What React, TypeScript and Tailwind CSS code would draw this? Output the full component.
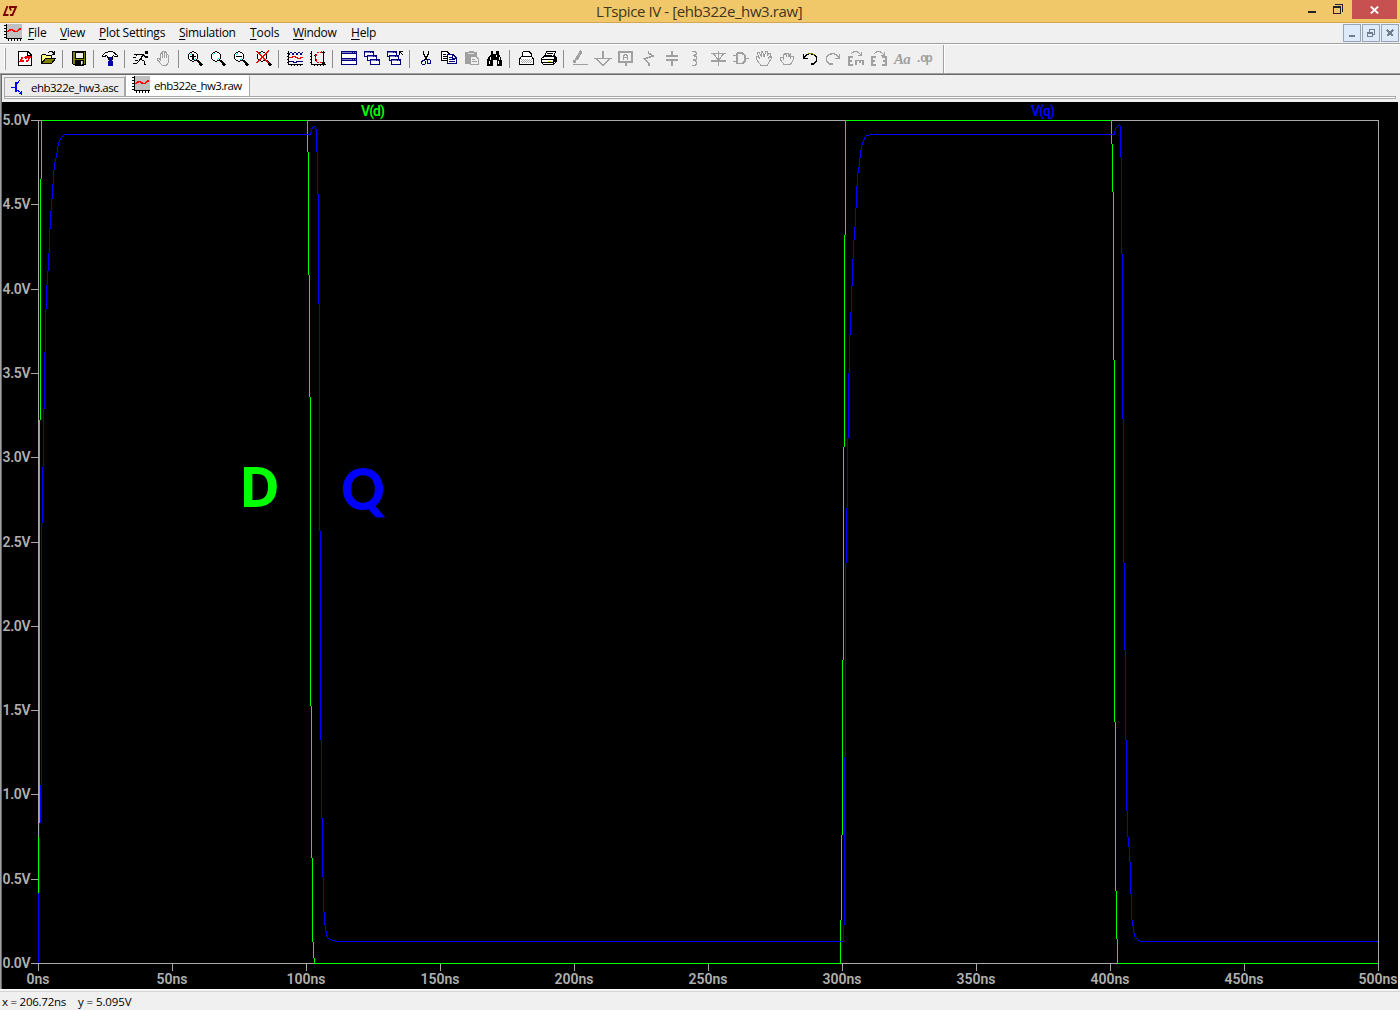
import type { ReactNode } from "react";

const Icon = ({ children, className = "" }: { children: ReactNode; className?: string }) => (
  <span className="flex h-5 w-[23px] shrink-0 pl-1 pt-[2px]">
    <svg width="16" height="16" viewBox="0 0 16 16" fill="none" stroke="#000" shapeRendering="crispEdges" className={"overflow-visible " + className}>
      {children}
    </svg>
  </span>
);

const Sep = () => <span className="ml-[3px] mr-1 h-[18px] w-px shrink-0 self-center bg-[#8d8d8d]" />;

const G = "#a0a0a0";

const PlotIcon = () => (
  <svg width="18" height="18" viewBox="0 0 18 18" shapeRendering="crispEdges" fill="none">
    <path d="M3 0H18V14H3z" fill="#c0c0c0" />
    <path d="M2.5 0V14.5H18M0 1.5H3M0 4.5H3M0 7.5H3M0 10.5H3M0 13.5H3M4.5 14V17M7.5 14V17M10.5 14V17M13.5 14V17M16.5 14V17" stroke="#000" />
    <path d="M3 7.5H4L5 6.5L6.5 5.5H8L10 7L11 7.5H13L15 5.5L17 4.5" stroke="#f00" strokeWidth="1.7" />
  </svg>
);

const Zoom = ({ children }: { children?: ReactNode }) => (
  <Icon>
    <circle cx="6" cy="5.5" r="4.7" fill="#fff" />
    <path d="M3 4L5 2M7 9L9 7" stroke="#0ff" />
    <path d="M10 9L15 14.5" strokeWidth="2.4" />
    {children}
  </Icon>
);

const Win = ({ x, y }: { x: number; y: number }) => (
  <>
    <path d={`M${x + 0.5} ${y + 0.5}h9v5h-9z`} fill="#fff" stroke="#000080" />
    <path d={`M${x} ${y + 1}h10`} stroke="#000080" strokeWidth="2" />
    <path d={`M${x + 1} ${y + 1.5}h5M${x + 7} ${y + 1.5}h1`} stroke="#8080c0" />
  </>
);

const Toolbar = () => (
  <div className="flex h-[30px] items-center border-b border-t border-b-[#a0a0a0] border-t-white">
    <span className="ml-1 mr-[7px] h-[22px] w-[2px] border-r border-[#a0a0a0] bg-white" />
    <Icon>
      <path d="M1.5 .5H11L14.5 4V14.5H1.5z" fill="#fff" />
      <path d="M10.5 1V4.5H14" />
      <path d="M5.5 6L3.5 10H7M7.5 6H13L10.5 10H9M8 6L9.5 8" stroke="#f00" strokeWidth="1.5" />
    </Icon>
    <Icon>
      <path d="M1.5 12.5V4.5L2.5 3.5H5.5L6.5 4.5H11.5V7.5" fill="#ffff80" />
      <path d="M1.5 12.5L5.5 7.5H15.5L11.5 12.5z" fill="#808000" />
      <path d="M8.5 1.5L10 .5H12L14.5 3M14.5 0V3.5H11.5" />
    </Icon>
    <Sep />
    <Icon>
      <path d="M1.5 .5H14.5V13.5H2.5L1.5 12.5z" fill="#808000" />
      <path d="M4 1H12V7H4z" fill="#efefef" />
      <path d="M4 9H12V14H4z" fill="#000" /><path d="M10 10H11V13H10z" fill="#fff" stroke="#fff" strokeWidth=".6" />
    </Icon>
    <Sep />
    <Icon>
      <path d="M.5 4.5L3.5 1.5H5.5L6.5 .5H10.5L15.5 4.5V5.5H12.5L11.5 4.5L10 6.5H6L4.5 4.5L2.5 5.5H.5z" fill="#fff" />
      <path d="M7 6H10V10H11V15H6V10H7z" fill="#0000b0" stroke="none" />
      <path d="M6.5 6V9M10.5 6V9" />
    </Icon>
    <Sep />
    <Icon>
      <path d="M12 0H14.5V2.5H12z" fill="#000" stroke="none" />
      <path d="M4 3.5H10L13 6H15M10 4L7 9" strokeWidth="1.6" />
      <path d="M4.5 3L2.5 5.5M8 8.5L11 10V13H13M7 9L4 12H0M1 3.5H3M0 6.5H3M2 9.5H5" />
    </Icon>
    <Icon>
      <path d="M6.5 14.5L1.5 9V7.5H3L4.5 9.5V3L5.5 2L6.5 3V7V1L7.5 .5L8.5 1V7V1.5L9.5 1L10.5 2V7V4L11.5 3.5L12.5 4.5V11L10.5 14.5z" stroke={G} />
    </Icon>
    <Sep />
    <Zoom><path d="M3 5.5H9M6 3V9" strokeWidth="1.5" /></Zoom>
    <Zoom />
    <Zoom><path d="M3 5.5H9" strokeWidth="1.5" /></Zoom>
    <Zoom><path d="M0 0L13 12M13 0L0 12" stroke="#f00" strokeWidth="1.4" /></Zoom>
    <Sep />
    <Icon>
      <path d="M1.5 0V13.5H16M0 2.5H2M0 5.5H2M0 8.5H2M0 11.5H2M4.5 14V15M7.5 14V15M10.5 14V15M13.5 14V15" />
      <path d="M2 3.5L4 1L6 3.5L8 1L10 3.5L12 1L14 3.5L16 1M2 10.5H6V11.5H9V10.5H16" stroke="#000080" />
      <path d="M2 6.5H5V5.5H8V6.5H10V7.5H13V6.5H16" stroke="#f00" />
    </Icon>
    <Icon>
      <path d="M1.5 0V13.5H16M0 2.5H2M0 5.5H2M0 8.5H2M0 11.5H2M4.5 14V15M7.5 14V15M10.5 14V15M13.5 14V15M13.5 0V13M12 2L13.5 .5L15 2M12 11.5L13.5 13L15 11.5M5.5 3V10M4.5 5L5.5 4L6.5 5" />
      <path d="M12 1L8 1.5L5.5 5V8L8 11.5H12" stroke="#f00" strokeDasharray="2 1" strokeWidth="1.3" />
    </Icon>
    <Sep />
    <Icon>
      <path d="M0.5 .5H15.5V13.5H.5z" fill="#fff" stroke="#000080" />
      <path d="M0 1.5H16M0 8.5H16" stroke="#000080" strokeWidth="3" />
      <path d="M1 1.5H11M12 1.5H13M14 1.5H15M1 8.5H11M12 8.5H13M14 8.5H15" stroke="#8080c0" />
    </Icon>
    <Icon><Win x={0} y={0} /><Win x={3} y={4} /><Win x={6} y={8} /></Icon>
    <Icon><Win x={0} y={0} /><Win x={2} y={4} /><Win x={4} y={8} /><path d="M12.5 4V.5H16M13 1L16 4" /></Icon>
    <Sep />
    <Icon>
      <path d="M5.5 0V3L9 9M10.5 0V3L7 9" strokeWidth="1.4" />
      <path d="M5 9.5H6.5L7.5 11V12.5L6 13.5H4.5L3.5 12.5V11zM10 8.5H11.5L12.5 10V12L11.5 12.5H10L9 11.5V9.5z" stroke="#000080" />
    </Icon>
    <Icon>
      <path d="M.5 .5H6L8.5 3V9.5H.5z" fill="#fff" /><path d="M2 3.5H5M2 5.5H6M2 7.5H6" />
      <path d="M6.5 3.5H12L15.5 7V12.5H6.5z" fill="#fff" stroke="#000080" /><path d="M8 6.5H11M8 8.5H14M8 10.5H14M11.5 4V7.5H15" stroke="#000080" />
    </Icon>
    <Icon>
      <path d="M1 1H4L5 0H9L10 1H13V13H1z" fill={G} stroke="none" />
      <path d="M4 2.5H10" stroke="#ddd" />
      <path d="M6.5 5.5H12L14.5 8V13.5H6.5z" fill="#efefef" stroke={G} /><path d="M8 8.5H11M8 10.5H13" stroke={G} />
    </Icon>
    <Icon>
      <path d="M4 0H6V3H9V0H12V3L14 7L15 10V15H10V9H6V15H0V10L1 7L4 3z" fill="#000" stroke="none" />
      <path d="M3.5 6V9M2.5 10V13M9.5 4V6M12.5 6V9M11.5 10V13" stroke="#fff" />
    </Icon>
    <Sep />
    <Icon>
      <path d="M4.5 5V1.5L6 .5H11L13.5 3V6" fill="#fff" />
      <path d="M3.5 5.5H13.5L15.5 8V13.5H1.5V8z" fill="#fff" /><path d="M3 8.5H14M3 10.5H14" stroke="#aaa" strokeDasharray="1 1" /><path d="M3 9.5H14M3 11.5H14" stroke="#aaa" strokeDasharray="1 1" strokeDashoffset="1" />
    </Icon>
    <Icon>
      <path d="M3.5 6L5.5 .5H14.5L12.5 6" fill="#fff" /><path d="M6 2.5H12M5 4.5H11" />
      <path d="M.5 7.5L3 5.5H14.5L15.5 7V10L12.5 13.5H2.5L.5 11.5z" fill="#fff" />
      <path d="M1 8.5H12M1 11.5H12M12.5 8V14M14 6V11" strokeWidth="1.4" /><path d="M7 10.5H10" stroke="#dd0" />
    </Icon>
    <Sep />
    <Icon><path d="M9.5 0L4 9M3 9L2 12" stroke={G} strokeWidth="3" /><path d="M1 13.5H16" stroke={G} /></Icon>
    <Icon><path d="M8 0V7M.5 7.5H15.5L8 14.5z" stroke={G} strokeWidth="1.4" /></Icon>
    <Icon>
      <path d="M1 1H14V11H1zM8 11V14.5" stroke={G} strokeWidth="1.7" />
      <path d="M5.5 9V5L6.5 3.5H8.5L9.5 5V9M5 6.5H10" stroke={G} strokeWidth="1.3" />
    </Icon>
    <Icon><path d="M7.5 0V2L12 5L3 8L8 12V15" stroke={G} strokeWidth="1.4" /></Icon>
    <Icon><path d="M8 0V5M8 9V15M2 5H14M2 9H14" stroke={G} strokeWidth="2" /></Icon>
    <Icon><path d="M5 .5H8L9.5 2V3.5L7 4.5L9.5 6V8L7 9L9.5 11V13L8 14.5H5" stroke={G} strokeWidth="1.5" /></Icon>
    <Icon><path d="M8.5 0V15M1 2.5H16M1 10H16M3.5 3L8.5 9L13.5 3" stroke={G} strokeWidth="1.3" /></Icon>
    <Icon><path d="M0 4.5H4M0 10.5H4M4 2V12.5H9L12 10.5V4.5L9 2H3.5M12 7.5H16" stroke={G} strokeWidth="1.7" /></Icon>
    <Icon><path d="M5 14.5L0 8V6L2 5.5L4 8L1.5 3V1.5H3L6 6L5 1L6.5 .5L8 6L10 .5H11V5L13 2H14.5V4L12 8L15 5.5L15.5 7L11 14.5z" stroke={G} /></Icon>
    <Icon><path d="M5 13.5L1.5 9V6.5H3.5L4.5 8V3.5L6.5 2.5L7.5 6V2.5H9L10 6V3.5L11.5 3V7L12.5 5.5H14V9L11.5 13.5z" stroke={G} /></Icon>
    <Icon><path d="M1.5 3V7.5H6M2 7L5 3.5L8 2.5L12 3.5L14.5 6V10L12 13H9" strokeWidth="1.3" /><path d="M6 2.5H10L13 4" stroke="#808000" /></Icon>
    <Icon><path d="M14.5 3V7.5H10M14 7L11 3.5L8 2.5L4 3.5L1.5 6V10L4 13H8" stroke={G} strokeWidth="1.3" /></Icon>
    <Icon>
      <path d="M5 6H1V14H5M1 10H4M8 14V9.5H16M12 10V12M15 10V14" stroke={G} strokeWidth="1.6" />
      <path d="M3 3L6 .5H9L13 4M13.5 1V4.5H10" stroke={G} />
    </Icon>
    <Icon>
      <path d="M5 6H1V14H5M1 10H4M11 6H15V14H11M15 10H12" stroke={G} strokeWidth="1.6" />
      <path d="M3 3L6 .5H9L13 4M13.5 1V4.5H10" stroke={G} />
    </Icon>
    <span className="h-5 w-[23px] pl-1 font-['Liberation_Serif',serif] text-[15px] font-bold italic leading-[21px] tracking-[-0.8px] text-[#a0a0a0]">Aa</span>
    <span className="h-5 w-[23px] pl-[2px] font-['Liberation_Mono',monospace] text-[12px] font-bold leading-5 tracking-[-2px] text-[#a0a0a0]">.op</span>
    <span className="ml-[7px] h-[28px] w-px bg-[#a0a0a0]" />
    <span className="h-[28px] w-px bg-white" />
  </div>
);

/* One vertical run per pixel column, starting at column x. */
const cols = (x: number, ys: number[]) =>
  ys.slice(1).map((y, i) => `M${x + i + 0.5} ${ys[i]}V${y}`).join("");

const green =
  cols(38, [963, 837, 420, 179, 120]) + "M41 120.5H308" +
  cols(307, [120, 152, 275, 397, 706, 858, 942, 958, 964]) + "M314 963.5H841" +
  cols(840, [964, 920, 835, 660, 447, 235, 120]) + "M845 120.5H1112" +
  cols(1111, [120, 144, 192, 360, 722, 891, 939, 964]) + "M1117 963.5H1378";

const blue =
  cols(38, [963, 893, 823, 785, 523, 467, 409, 352, 309, 285, 271, 253, 229, 211, 199, 184, 170, 162, 158, 153, 146, 142, 140, 138, 137, 136, 135]) +
  "M64 134.5H311" +
  cols(310, [135, 132, 129, 127]) + "M313 126.5H315" +
  cols(315, [127, 129, 152, 194, 304, 531, 740, 818, 877, 912, 925, 931, 936, 938]) +
  "M328 938.5H330M330 939.5H332M332 940.5H335M335 941.5H843" +
  cols(843, [941, 925, 757, 563, 508, 438, 373, 335, 312, 286, 259, 240, 227, 208, 186, 173, 167, 158, 150, 145, 142, 140, 137, 136]) +
  "M866 135.5H869M869 134.5H1115" +
  cols(1114, [134, 131, 128, 127, 126, 125, 124]) +
  cols(1120, [126, 157, 254, 419, 563, 650, 740, 811, 837, 847, 862, 894, 920, 926, 933, 937]) +
  "M1135 938.5H1137M1137 939.5H1138M1138 940.5H1140M1140 941.5H1378";

const yTicks = [120, 204, 289, 373, 457, 542, 626, 710, 794, 879, 963];

const Plot = () => (
  <svg width="1396" height="887" viewBox="2 102 1396 887" className="block bg-black font-['Roboto',sans-serif] text-[14px] font-semibold">
    <g shapeRendering="crispEdges" fill="none">
      <path d="M38.5 120.5H1378.5V963.5H38.5z" stroke="#a8a8a8" />
      {yTicks.map((y, i) => (
        <path key={y} d={`M31 ${y + 0.5}H38M${38.5 + i * 134} 964V971`} stroke="#a8a8a8" />
      ))}
      <path d={green} stroke="#0f0" />
      <path d={blue} stroke="#00f" />
    </g>
    <g fill="#b0b0b0">
      {yTicks.map((y, i) => (
        <text key={y} x="2.5" y={y + 5} textLength="28">{(5 - i * 0.5).toFixed(1)}V</text>
      ))}
      {yTicks.map((y, i) => (
        <text key={y} x={38 + i * 134} y="984" textAnchor="middle" textLength={i === 0 ? 23 : i === 1 ? 31 : 39}>{i * 50}ns</text>
      ))}
    </g>
    <text x="361" y="115.5" fill="#0f0" textLength="24">V(d)</text>
    <text x="1031" y="115.5" fill="#00f" textLength="24">V(q)</text>
    <text x="239" y="507" fill="#0f0" fontSize="56" fontWeight="700" fontFamily="Open Sans" textLength="41" lengthAdjust="spacingAndGlyphs">D</text>
    <text x="341" y="509.5" fill="#00f" fontSize="57" fontWeight="900" fontFamily="Lato" textLength="44" lengthAdjust="spacingAndGlyphs">Q</text>
  </svg>
);

const menus = [
  ["File", "w-[32px]", "tracking-[-0.1px]"],
  ["View", "w-[39px]", "tracking-[-0.35px]"],
  ["Plot Settings", "w-[80px]", "tracking-[-0.25px]"],
  ["Simulation", "w-[71px]", "tracking-[-0.3px]"],
  ["Tools", "w-[43px]", "tracking-[-0.1px]"],
  ["Window", "w-[58px]", "tracking-[-0.3px]"],
  ["Help", "w-[40px]", "tracking-[-0.2px]"],
];

const MdiButton = ({ children }: { children: ReactNode }) => (
  <span className="flex h-[18px] w-[18px] items-center justify-center border border-[#95a5b7] bg-[#dceafa]">
    <svg width="12" height="12" viewBox="0 0 12 12" fill="none" stroke="#6f7f8e" shapeRendering="crispEdges">{children}</svg>
  </span>
);

export default function App() {
  return (
    <div className="flex h-[1010px] w-[1400px] flex-col overflow-hidden bg-[#f0f0f0] font-['Open_Sans',sans-serif] text-black">
      <header className="flex h-[23px] items-start border-b border-[#d2a857] bg-[#f0c869]">
        <svg width="18" height="22" viewBox="0 0 18 22" fill="none" stroke="#800000" strokeWidth="1.9">
          <path d="M7.5 6L4 15H8.5M9 7H16L12.5 15H10M9.5 7L11 10.5" />
        </svg>
        <h1 className="ml-[578px] whitespace-nowrap text-[15px] leading-[23px] tracking-[-0.4px] text-[#40351f]">LTspice IV - [ehb322e_hw3.raw]</h1>
        <div className="ml-auto flex">
          <svg width="48" height="20" viewBox="0 0 48 20" fill="none" stroke="#222" shapeRendering="crispEdges">
            <path d="M4 12H12" strokeWidth="2" />
            <path d="M29.5 6.5H36.5V13.5H29.5zM29 7.5H37M31 4.5H38.5V12" />
          </svg>
          <span className="mr-[3px] flex h-[19px] w-[45px] items-center justify-center bg-[#c75050]">
            <svg width="9" height="8" viewBox="0 0 9 8" stroke="#fff" strokeWidth="1.8"><path d="M.8 .5L8.2 7.5M8.2 .5L.8 7.5" /></svg>
          </span>
        </div>
      </header>

      <nav className="flex h-[21px] items-start border-b border-[#a0a0a0] text-[12px]">
        <span className="ml-1 mr-[6px] mt-px"><PlotIcon /></span>
        {menus.map(([m, w, t]) => (
          <span key={m} className={"shrink-0 whitespace-nowrap leading-5 " + w + " " + t}>
            <span className="underline underline-offset-2">{m[0]}</span>{m.slice(1)}
          </span>
        ))}
        <div className="ml-auto mr-[1px] mt-px flex gap-px">
          <MdiButton><path d="M3 8.5H9" strokeWidth="2" /></MdiButton>
          <MdiButton><path d="M2.5 5.5H7.5V9.5H2.5zM2 6H8M4.5 5V2.5H9.5V7.5H8" strokeWidth="1.3" /></MdiButton>
          <MdiButton><path d="M3 3L9 9M9 3L3 9" strokeWidth="2" /></MdiButton>
        </div>
      </nav>

      <Toolbar />

      <div className="flex h-[28px] border-l border-t border-l-[#a0a0a0] border-t-[#696969]">
        <div className="flex h-full w-full flex-col border-l border-[#696969]">
          <div className="flex h-[21px] items-end pl-[2px]">
            <div className="flex h-[19px] w-[121px] items-center border border-b-0 border-[#a8a8a8] bg-[#ececec] pl-[6px]">
              <svg width="14" height="16" viewBox="0 0 14 16" fill="none" stroke="#00f" shapeRendering="crispEdges">
                <path d="M0 8H5M9 1L5 6M5 10L10 14M10 12V15.5M8 14.5H11" /><path d="M5 3V13" strokeWidth="1.8" />
              </svg>
              <span className="ml-[6px] mt-px whitespace-nowrap text-[11.5px] tracking-[-0.5px]">ehb322e_hw3.asc</span>
            </div>
            <div className="flex h-[21px] w-[125px] items-start border border-b-0 border-[#a8a8a8] border-t-white bg-white pl-[6px]">
              <span><PlotIcon /></span>
              <span className="ml-1 mt-px whitespace-nowrap text-[11.5px] leading-[18px] tracking-[-0.65px]">ehb322e_hw3.raw</span>
            </div>
          </div>
          <div className="ml-[2px] mr-1 h-[3px] border border-[#a8a8a8] bg-white" />
        </div>
      </div>

      <main className="h-[887px] border-l border-[#a0a0a0]">
        <div className="border-l border-[#696969]"><Plot /></div>
      </main>

      <footer className="h-[21px] border-t border-white pt-px">
        <div className="flex h-full items-center border-t border-[#d5d5d5] pl-[2px] pt-px text-[11.5px]">
          <span className="w-[76px] whitespace-nowrap tracking-[-0.25px]">x = 206.72ns</span>
          <span className="whitespace-nowrap tracking-[-0.1px]">y = 5.095V</span>
        </div>
      </footer>
    </div>
  );
}
